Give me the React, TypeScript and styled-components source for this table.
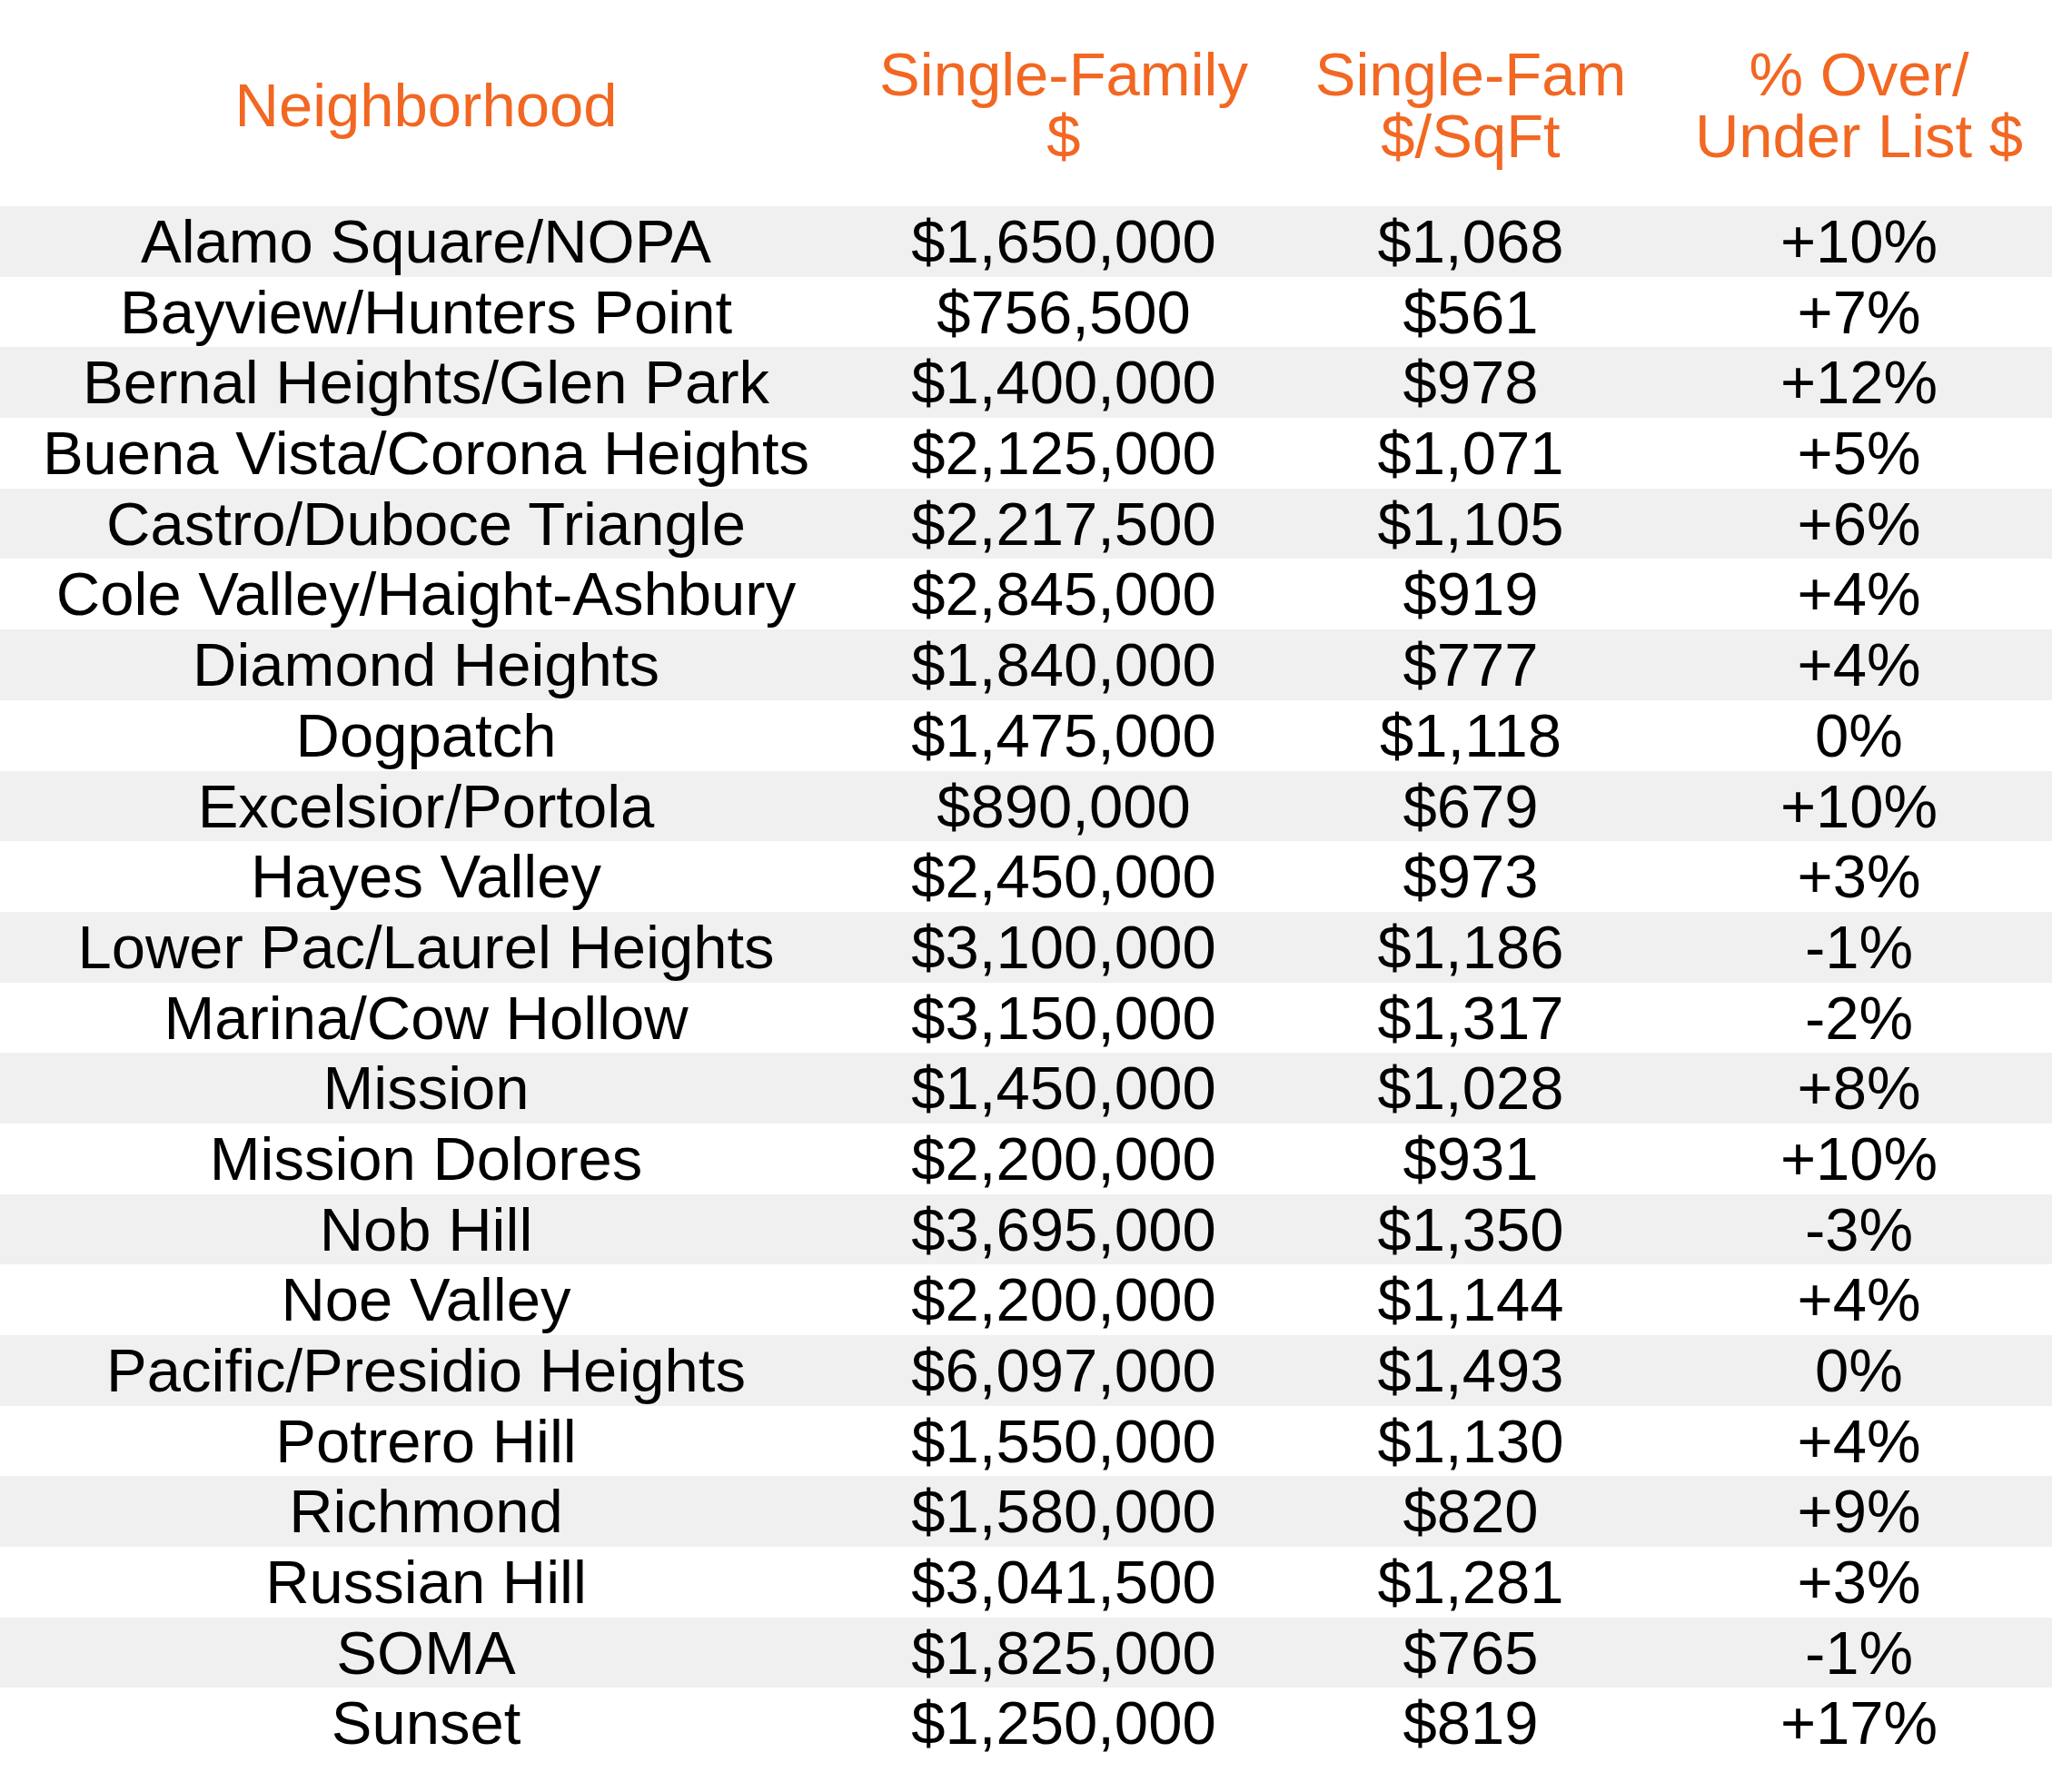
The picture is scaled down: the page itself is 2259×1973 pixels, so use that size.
import React from "react";
import styled, { createGlobalStyle } from "styled-components";

const GlobalStyle = createGlobalStyle`
  html, body {
    margin: 0;
    padding: 0;
    background: #ffffff;
  }
  body {
    font-family: "Liberation Sans", Arial, Helvetica, sans-serif;
  }
`;

const Page = styled.div`
  width: 2259px;
  min-height: 1973px;
  background: #ffffff;
  font-family: "Liberation Sans", Arial, Helvetica, sans-serif;
`;

const Table = styled.div`
  display: flex;
  flex-direction: column;
`;

const cols = "938px 466px 430px 1fr";

const HeaderRow = styled.div`
  display: grid;
  grid-template-columns: ${cols};
  height: 227px;
  padding-top: 4px;
  box-sizing: border-box;
`;

const HeaderCell = styled.div`
  display: flex;
  align-items: center;
  justify-content: center;
  text-align: center;
  color: #f26722;
  font-size: 67px;
  line-height: 68px;
`;

const Row = styled.div<{ $shaded: boolean }>`
  display: grid;
  grid-template-columns: ${cols};
  height: 77.7px;
  background: ${(p) => (p.$shaded ? "#f0f0f0" : "#ffffff")};
`;

const Cell = styled.div`
  text-align: center;
  color: #000000;
  font-size: 67px;
  line-height: 77.7px;
  white-space: nowrap;
`;

const rows: [string, string, string, string][] = [
  ["Alamo Square/NOPA", "$1,650,000", "$1,068", "+10%"],
  ["Bayview/Hunters Point", "$756,500", "$561", "+7%"],
  ["Bernal Heights/Glen Park", "$1,400,000", "$978", "+12%"],
  ["Buena Vista/Corona Heights", "$2,125,000", "$1,071", "+5%"],
  ["Castro/Duboce Triangle", "$2,217,500", "$1,105", "+6%"],
  ["Cole Valley/Haight-Ashbury", "$2,845,000", "$919", "+4%"],
  ["Diamond Heights", "$1,840,000", "$777", "+4%"],
  ["Dogpatch", "$1,475,000", "$1,118", "0%"],
  ["Excelsior/Portola", "$890,000", "$679", "+10%"],
  ["Hayes Valley", "$2,450,000", "$973", "+3%"],
  ["Lower Pac/Laurel Heights", "$3,100,000", "$1,186", "-1%"],
  ["Marina/Cow Hollow", "$3,150,000", "$1,317", "-2%"],
  ["Mission", "$1,450,000", "$1,028", "+8%"],
  ["Mission Dolores", "$2,200,000", "$931", "+10%"],
  ["Nob Hill", "$3,695,000", "$1,350", "-3%"],
  ["Noe Valley", "$2,200,000", "$1,144", "+4%"],
  ["Pacific/Presidio Heights", "$6,097,000", "$1,493", "0%"],
  ["Potrero Hill", "$1,550,000", "$1,130", "+4%"],
  ["Richmond", "$1,580,000", "$820", "+9%"],
  ["Russian Hill", "$3,041,500", "$1,281", "+3%"],
  ["SOMA", "$1,825,000", "$765", "-1%"],
  ["Sunset", "$1,250,000", "$819", "+17%"],
];

export default function App() {
  return (
    <Page>
      <GlobalStyle />
      <Table>
        <HeaderRow>
          <HeaderCell>Neighborhood</HeaderCell>
          <HeaderCell>
            Single-Family
            <br />$
          </HeaderCell>
          <HeaderCell>
            Single-Fam
            <br />
            $/SqFt
          </HeaderCell>
          <HeaderCell>
            % Over/
            <br />
            Under List $
          </HeaderCell>
        </HeaderRow>
        {rows.map((r, i) => (
          <Row key={r[0]} $shaded={i % 2 === 0}>
            {r.map((c, j) => (
              <Cell key={j}>{c}</Cell>
            ))}
          </Row>
        ))}
      </Table>
    </Page>
  );
}
